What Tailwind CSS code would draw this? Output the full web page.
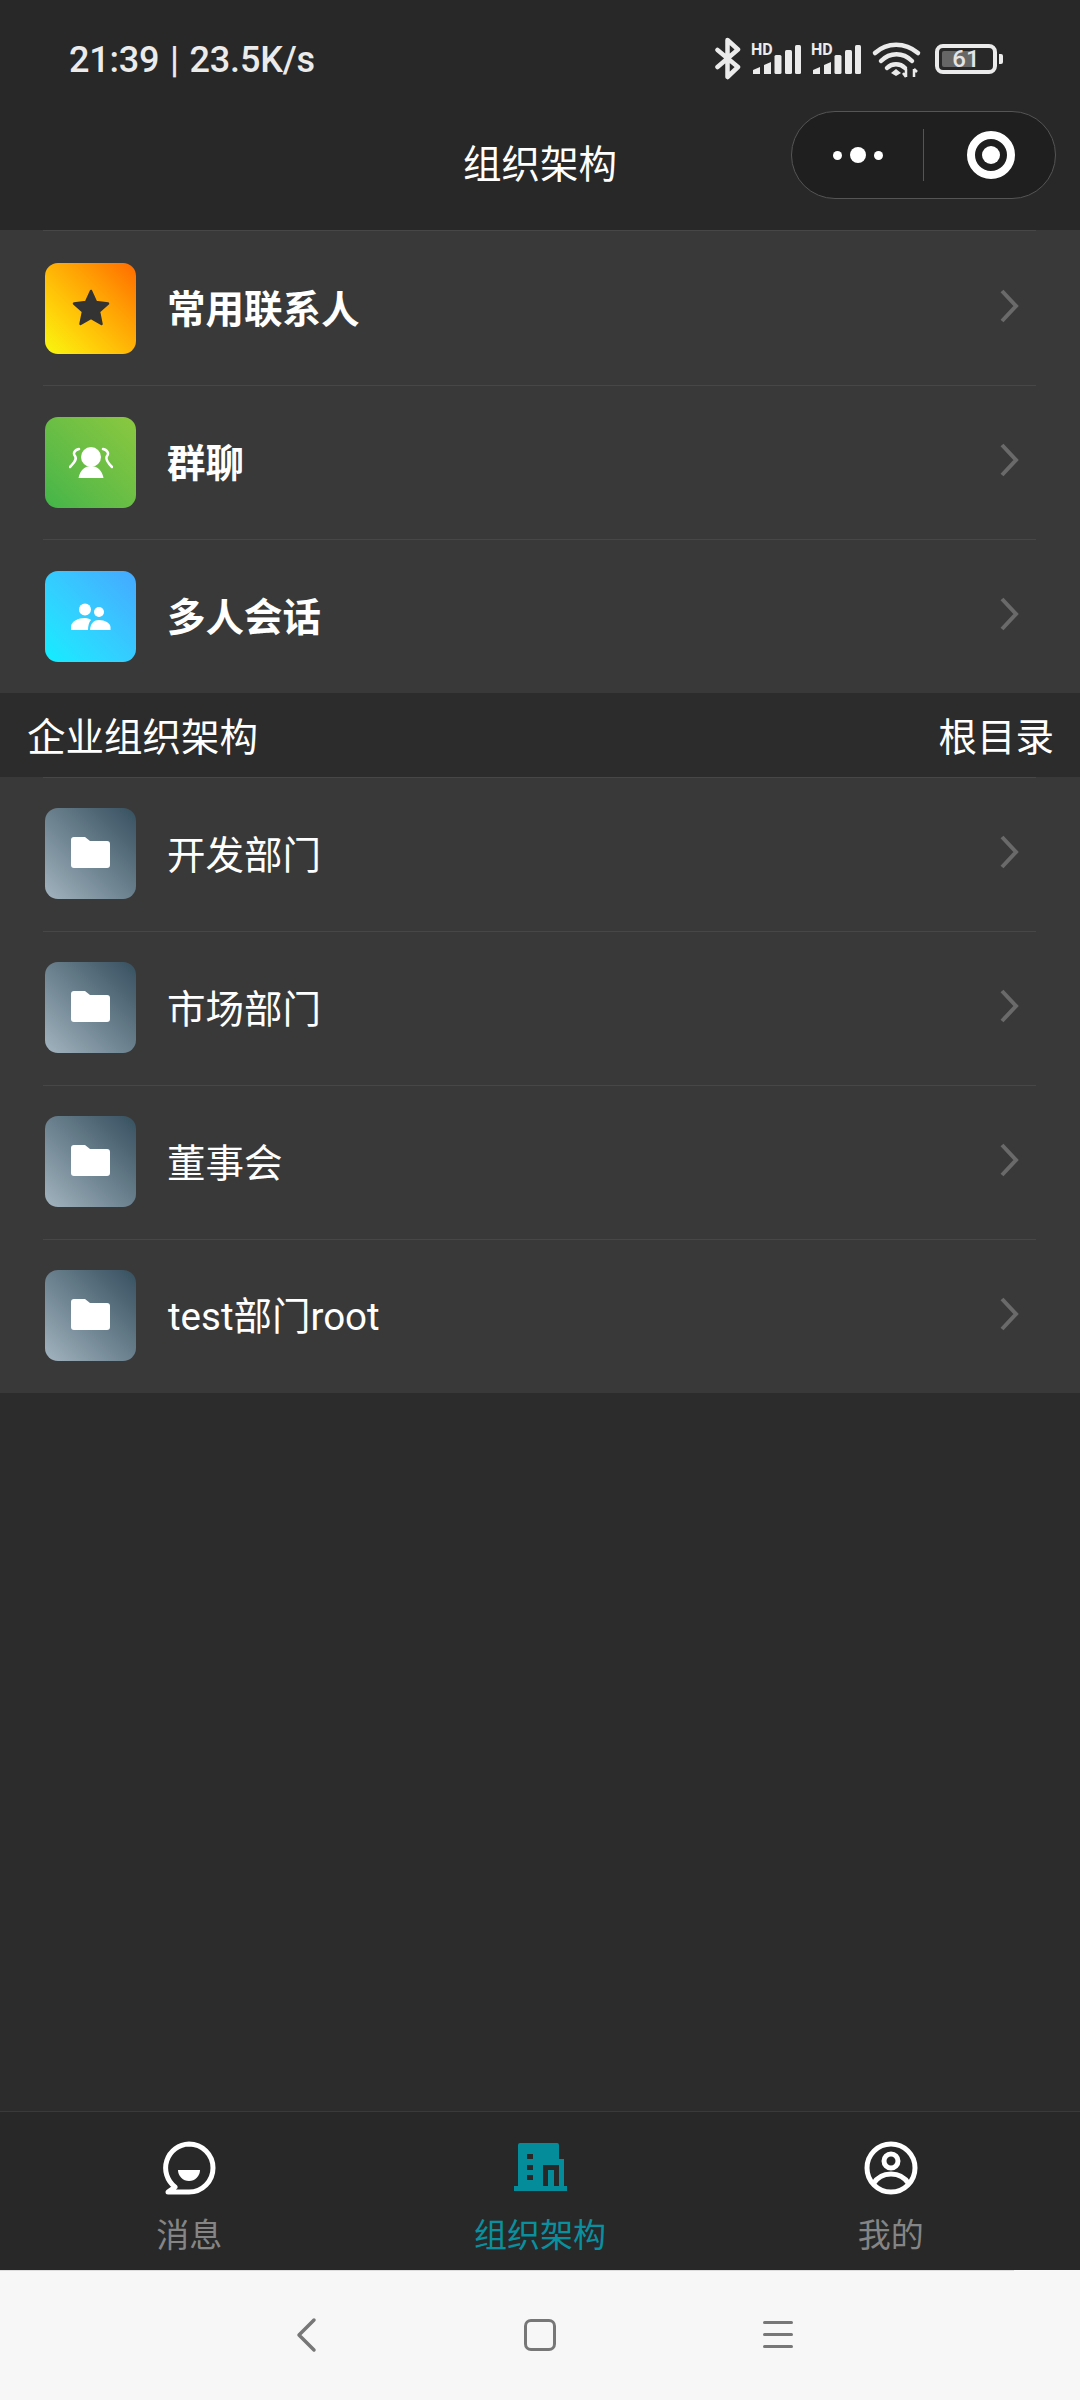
<!DOCTYPE html>
<html lang="zh">
<head>
<meta charset="utf-8">
<script src="https://cdn.jsdelivr.net/npm/@tailwindcss/browser@4"></script>
</head>
<body class="w-[1080px] h-[2400px] overflow-hidden bg-[#2c2c2c] font-['Noto_Sans_CJK_SC','Noto_Sans',sans-serif] text-white">
<div class="flex flex-col h-[2400px]">
  <!-- header -->
  <header class="relative h-[230px] shrink-0 bg-[#282828]">
    <div class="flex items-center justify-between h-[118px] pl-[69px] pr-[77px]">
      <span class="mt-[2px] font-['Roboto',sans-serif] font-medium text-[36px] leading-none text-[#ebebeb] tracking-[-0.2px] [word-spacing:2px]">21:39 | 23.5K/s</span>
      <div class="flex items-center text-[#ebebeb]">
        <svg class="w-[220px] h-[44px]" viewBox="0 0 220 44" fill="#ebebeb">
          <path d="M2.5 13 L23 30 L12.5 40 V3 L23 12.5 L2.5 30" fill="none" stroke="#ebebeb" stroke-width="4.5" stroke-linejoin="round" stroke-linecap="round"/>
          <text x="36" y="18" font-family="Roboto" font-weight="700" font-size="16">HD</text>
          <path d="M38 33 l7-3 v7 h-7z M49 28 l7-3 v12 h-7z"/>
          <rect x="59.5" y="18" width="7" height="19" rx="1.5"/><rect x="70" y="13" width="7" height="24" rx="1.5"/><rect x="80" y="8" width="6" height="29" rx="1.5"/>
          <text x="96" y="18" font-family="Roboto" font-weight="700" font-size="16">HD</text>
          <path d="M98 33 l7-3 v7 h-7z M109 28 l7-3 v12 h-7z"/>
          <rect x="119.5" y="18" width="7" height="19" rx="1.5"/><rect x="130" y="13" width="7" height="24" rx="1.5"/><rect x="140" y="8" width="6" height="29" rx="1.5"/>
          <path d="M160 16 C172 5 190 5 203 16 M166 24 C175 15 188 15 197 24 M172 31 C177 26 185 26 190 31" fill="none" stroke="#ebebeb" stroke-width="4.5" stroke-linecap="round"/>
          <path d="M176 36 l5-4 l5 4 l-5 3z"/>
          <path d="M191 32 v8 M188 36 l3 4 M199 32 v8 M199 32 l3 3" fill="none" stroke="#ebebeb" stroke-width="2.5"/>
        </svg>
        <div class="relative flex items-center">
          <div class="relative flex h-[30px] w-[62px] items-center justify-center overflow-hidden rounded-[8px] border-[4px] border-[#ebebeb]">
            <div class="absolute left-[3px] top-[3px] bottom-[3px] w-[33px] rounded-[2px] bg-[#666666]"></div>
            <span class="relative font-['Roboto',sans-serif] font-medium text-[24px] leading-none text-[#e4e4e4]">61</span>
          </div>
          <div class="ml-[2px] h-[10px] w-[4px] rounded-r-[2px] bg-[#ebebeb]"></div>
        </div>
      </div>
    </div>
    <h1 class="text-center text-[38.5px] leading-[56px] font-normal mt-[15px]">组织架构</h1>
    <!-- capsule -->
    <div class="absolute left-[791px] top-[111px] flex h-[88px] w-[265px] items-center rounded-full border border-[#555555] bg-[#1f1f1f]">
      <div class="flex w-[131px] items-center justify-center gap-[8px]">
        <span class="size-[9px] rounded-full bg-white"></span>
        <span class="size-[16px] rounded-full bg-white"></span>
        <span class="size-[9px] rounded-full bg-white"></span>
      </div>
      <div class="h-[52px] w-px bg-[#555555]"></div>
      <div class="flex flex-1 items-center justify-center pl-[2px]">
        <div class="flex size-[48px] items-center justify-center rounded-full border-[8px] border-white">
          <span class="size-[18px] rounded-full bg-white"></span>
        </div>
      </div>
    </div>
  </header>

  <!-- shortcuts -->
  <section class="shrink-0 bg-[#393939]">
    <div class="ml-[43px] w-[993px] h-[155px] border-t border-[#474747] flex items-center pl-[2px]">
      <div class="flex size-[91px] shrink-0 items-center justify-center rounded-[13px] bg-linear-to-tr from-[#f7f70f] to-[#ff6a00]">
        <svg class="size-[40px]" viewBox="0 0 40 40"><path d="M20 3 L25 14 L37 15.5 L28 23.5 L30.5 36 L20 30 L9.5 36 L12 23.5 L3 15.5 L15 14 Z" fill="#333333" stroke="#333333" stroke-width="2.5" stroke-linejoin="round"/></svg>
      </div>
      <span class="ml-[31px] mb-[4px] text-[38.5px] font-bold leading-none">常用联系人</span>
      <svg class="ml-auto mr-[17px] mb-[4px] w-[20px] h-[36px]" viewBox="0 0 20 36"><path d="M3 3 L17 18 L3 33" fill="none" stroke="#6a6a6a" stroke-width="4"/></svg>
    </div>
    <div class="ml-[43px] w-[993px] h-[154px] border-t border-[#474747] flex items-center pl-[2px]">
      <div class="flex size-[91px] shrink-0 items-center justify-center rounded-[13px] bg-linear-to-tr from-[#41b549] to-[#8bc83f]">
        <svg class="w-[44px] h-[32px]" viewBox="0 0 44 32" fill="white"><circle cx="22" cy="10" r="10"/><path d="M9.5 31 C11 23 16 19 22 19 C28 19 33 23 34.5 31 Z"/><path d="M10 2 C5 3 4 7 6 9 C8 12 6 15 1 20 M34 2 C39 3 40 7 38 9 C36 12 39 16 43 20" fill="none" stroke="white" stroke-width="2.5" stroke-linecap="round"/></svg>
      </div>
      <span class="ml-[31px] mb-[4px] text-[38.5px] font-bold leading-none">群聊</span>
      <svg class="ml-auto mr-[17px] mb-[5px] w-[20px] h-[36px]" viewBox="0 0 20 36"><path d="M3 3 L17 18 L3 33" fill="none" stroke="#6a6a6a" stroke-width="4"/></svg>
    </div>
    <div class="ml-[43px] w-[993px] h-[154px] border-t border-[#474747] flex items-center pl-[2px]">
      <div class="flex size-[91px] shrink-0 items-center justify-center rounded-[13px] bg-linear-to-tr from-[#0ceeff] to-[#45a8ff]">
        <svg class="w-[40px] h-[28px]" viewBox="0 0 40 28" fill="white"><circle cx="14" cy="6.5" r="6"/><circle cx="28" cy="9" r="5"/><path d="M0 27 V23 C1 18 7 15 14 15 C17 15 19 16 20 17 C18 19 17 23 17 27 Z"/><path d="M19 27 C19.5 20 23 17 28 17 C34 17 39 20 39.5 24 V27 Z"/></svg>
      </div>
      <span class="ml-[31px] mb-[4px] text-[38.5px] font-bold leading-none">多人会话</span>
      <svg class="ml-auto mr-[17px] mb-[5px] w-[20px] h-[36px]" viewBox="0 0 20 36"><path d="M3 3 L17 18 L3 33" fill="none" stroke="#6a6a6a" stroke-width="4"/></svg>
    </div>
  </section>

  <!-- section header -->
  <div class="flex h-[84px] shrink-0 items-center justify-between bg-[#2c2c2c] pl-[27px] pr-[26px] text-[38.5px] leading-none">
    <span class="mb-[2px]">企业组织架构</span>
    <span class="mb-[2px]">根目录</span>
  </div>

  <!-- departments -->
  <section class="shrink-0 bg-[#393939]">
    <div class="ml-[43px] w-[993px] h-[154px] border-t border-[#474747] flex items-center pl-[2px]">
      <div class="mb-[2px] flex size-[91px] shrink-0 items-center justify-center rounded-[13px] bg-linear-to-tr from-[#a2b4bf] to-[#37505f]">
        <svg class="mb-[2px] w-[39px] h-[31px]" viewBox="0 0 39 31"><path d="M3 0 H14 L19 4 H36 a3 3 0 0 1 3 3 V28 a3 3 0 0 1 -3 3 H3 a3 3 0 0 1 -3 -3 V3 a3 3 0 0 1 3 -3Z" fill="white"/></svg>
      </div>
      <span class="ml-[31px] mb-[4px] text-[38.5px] leading-none">开发部门</span>
      <svg class="ml-auto mr-[17px] mb-[5px] w-[20px] h-[36px]" viewBox="0 0 20 36"><path d="M3 3 L17 18 L3 33" fill="none" stroke="#6a6a6a" stroke-width="4"/></svg>
    </div>
    <div class="ml-[43px] w-[993px] h-[154px] border-t border-[#474747] flex items-center pl-[2px]">
      <div class="mb-[2px] flex size-[91px] shrink-0 items-center justify-center rounded-[13px] bg-linear-to-tr from-[#a2b4bf] to-[#37505f]">
        <svg class="mb-[2px] w-[39px] h-[31px]" viewBox="0 0 39 31"><path d="M3 0 H14 L19 4 H36 a3 3 0 0 1 3 3 V28 a3 3 0 0 1 -3 3 H3 a3 3 0 0 1 -3 -3 V3 a3 3 0 0 1 3 -3Z" fill="white"/></svg>
      </div>
      <span class="ml-[31px] mb-[4px] text-[38.5px] leading-none">市场部门</span>
      <svg class="ml-auto mr-[17px] mb-[5px] w-[20px] h-[36px]" viewBox="0 0 20 36"><path d="M3 3 L17 18 L3 33" fill="none" stroke="#6a6a6a" stroke-width="4"/></svg>
    </div>
    <div class="ml-[43px] w-[993px] h-[154px] border-t border-[#474747] flex items-center pl-[2px]">
      <div class="mb-[2px] flex size-[91px] shrink-0 items-center justify-center rounded-[13px] bg-linear-to-tr from-[#a2b4bf] to-[#37505f]">
        <svg class="mb-[2px] w-[39px] h-[31px]" viewBox="0 0 39 31"><path d="M3 0 H14 L19 4 H36 a3 3 0 0 1 3 3 V28 a3 3 0 0 1 -3 3 H3 a3 3 0 0 1 -3 -3 V3 a3 3 0 0 1 3 -3Z" fill="white"/></svg>
      </div>
      <span class="ml-[31px] mb-[4px] text-[38.5px] leading-none">董事会</span>
      <svg class="ml-auto mr-[17px] mb-[5px] w-[20px] h-[36px]" viewBox="0 0 20 36"><path d="M3 3 L17 18 L3 33" fill="none" stroke="#6a6a6a" stroke-width="4"/></svg>
    </div>
    <div class="ml-[43px] w-[993px] h-[154px] border-t border-[#474747] flex items-center pl-[2px]">
      <div class="mb-[2px] flex size-[91px] shrink-0 items-center justify-center rounded-[13px] bg-linear-to-tr from-[#a2b4bf] to-[#37505f]">
        <svg class="mb-[2px] w-[39px] h-[31px]" viewBox="0 0 39 31"><path d="M3 0 H14 L19 4 H36 a3 3 0 0 1 3 3 V28 a3 3 0 0 1 -3 3 H3 a3 3 0 0 1 -3 -3 V3 a3 3 0 0 1 3 -3Z" fill="white"/></svg>
      </div>
      <span class="ml-[32px] mt-[2px] font-['Roboto','Noto_Sans_CJK_SC',sans-serif] text-[38.5px] leading-none">test部门root</span>
      <svg class="ml-auto mr-[17px] mb-[5px] w-[20px] h-[36px]" viewBox="0 0 20 36"><path d="M3 3 L17 18 L3 33" fill="none" stroke="#6a6a6a" stroke-width="4"/></svg>
    </div>
  </section>

  <div class="flex-1"></div>

  <!-- tab bar -->
  <nav class="grid h-[159px] shrink-0 grid-cols-3 border-t border-[#3a3a3a] bg-[#282828] px-[14px] pt-[29px]">
    <div class="flex flex-col items-center">
      <svg class="size-[54px]" viewBox="0 0 54 54"><path d="M27 3 A24 24 0 1 1 27 51 H6 L13 46 A24 24 0 0 1 27 3Z" fill="none" stroke="white" stroke-width="5" stroke-linejoin="round"/><path d="M16 29 H38 A11 11 0 0 1 16 29Z" fill="white"/></svg>
      <span class="mt-[14px] text-[33px] leading-[48px] text-[#858585]">消息</span>
    </div>
    <div class="flex flex-col items-center">
      <svg class="size-[54px]" viewBox="0 0 54 54"><path d="M5 45 V4 a2 2 0 0 1 2 -2 H44 a2 2 0 0 1 2 2 V18 H51 V45 H54 V50 H1 V45Z" fill="#048c9b"/><rect x="14" y="13" width="6" height="5" fill="#282828"/><rect x="14" y="24" width="6" height="5" fill="#282828"/><rect x="14" y="34" width="6" height="5" fill="#282828"/><path d="M30 45 V24 H46 V45 H41 V29 H35 V45Z" fill="#282828"/></svg>
      <span class="mt-[14px] text-[33px] leading-[48px] text-[#0a8f9e]">组织架构</span>
    </div>
    <div class="flex flex-col items-center">
      <svg class="size-[54px]" viewBox="0 0 54 54"><circle cx="27" cy="27" r="24" fill="none" stroke="white" stroke-width="5"/><circle cx="27" cy="20" r="7" fill="none" stroke="white" stroke-width="5"/><path d="M9 43 C14 35 20 33 27 33 C34 33 40 35 45 43" fill="none" stroke="white" stroke-width="5"/></svg>
      <span class="mt-[14px] text-[33px] leading-[48px] text-[#858585]">我的</span>
    </div>
  </nav>

  <!-- system nav -->
  <div class="relative flex h-[130px] shrink-0 items-center bg-[#f7f7f7] pb-[1px]">
    <div class="absolute left-0 top-0 h-px w-[1014px] bg-[#dddddd]"></div>
    <svg class="ml-[295px] w-[22px] h-[36px]" viewBox="0 0 22 36"><path d="M19 3 L4 18 L19 33" fill="none" stroke="#777777" stroke-width="3.5" stroke-linecap="round" stroke-linejoin="round"/></svg>
    <div class="ml-[207px] size-[32px] rounded-[7px] border-[3px] border-[#777777]"></div>
    <div class="ml-[207px] flex w-[30px] flex-col gap-[9px]">
      <span class="h-[3px] rounded-full bg-[#777777]"></span>
      <span class="h-[3px] rounded-full bg-[#777777]"></span>
      <span class="h-[3px] rounded-full bg-[#777777]"></span>
    </div>
  </div>
</div>
</body>
</html>
